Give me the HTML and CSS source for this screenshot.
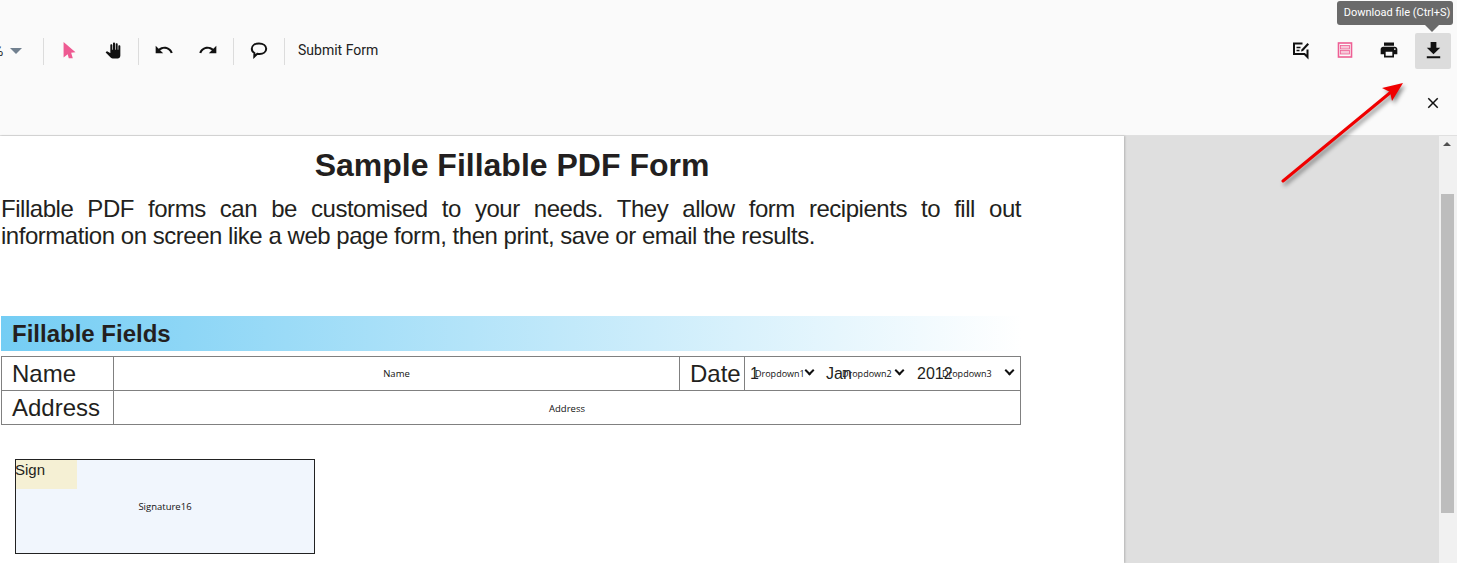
FILE: index.html
```html
<!DOCTYPE html>
<html lang="en">
<head>
  <meta charset="UTF-8">
  <title>PDF Viewer</title>
  <link rel="stylesheet" href="styles.css">
</head>
<body>

<!-- Toolbar -->
<header class="toolbar">
  <div class="toolbar-row">
    <div class="zoom-select">
      <span class="zoom-value">%</span>
      <span class="zoom-caret"></span>
    </div>
    <span class="sep"></span>
    <button class="tool">
      <svg width="26" height="26" viewBox="0 0 24 24"><path class="pink" d="M7 4.500 L18 14 L14 14.600 L15.500 19.500 L11.800 19.500 L10.800 16 L7 19 Z"/></svg>
    </button>
    <button class="tool">
      <svg width="16" height="17" viewBox="0 0 24 24"><path d="M23 5.500V20c0 2.200-1.800 4-4 4h-7.300c-1.080 0-2.100-.43-2.850-1.190L1 14.830s1.260-1.230 1.300-1.250c.22-.19.49-.29.79-.29.22 0 .42.06.6.16.04.01 4.310 2.460 4.310 2.460V4c0-.83.67-1.500 1.500-1.500S11 3.170 11 4v7h1V1.500c0-.83.67-1.500 1.500-1.500S15 .67 15 1.500V11h1V2.500c0-.83.67-1.500 1.500-1.500s1.500.67 1.500 1.500V11h1V5.500c0-.83.67-1.500 1.500-1.500s1.500.67 1.500 1.500z"/></svg>
    </button>
    <span class="sep"></span>
    <button class="tool">
      <svg width="20" height="20" viewBox="0 0 24 24"><path d="M12.500 8c-2.650 0-5.050.99-6.900 2.600L2 7v9h9l-3.620-3.620c1.390-1.160 3.160-1.880 5.120-1.880 3.540 0 6.550 2.310 7.600 5.500l2.370-.78C21.080 11.030 17.150 8 12.500 8z"/></svg>
    </button>
    <button class="tool">
      <svg width="20" height="20" viewBox="0 0 24 24"><path d="M18.400 10.600C16.550 8.990 14.150 8 11.500 8c-4.650 0-8.580 3.030-9.960 7.220L3.900 16c1.050-3.190 4.050-5.500 7.600-5.500 1.950 0 3.730.72 5.120 1.880L13 16h9V7l-3.600 3.600z"/></svg>
    </button>
    <span class="sep"></span>
    <button class="tool">
      <svg width="18" height="18" viewBox="0 0 18 18"><path class="line" d="M9 2.500c4.200 0 7.200 2.200 7.200 5.300S13.200 13 9.600 13c-.9 0-1.600-.1-2.300-.2L4.300 15.600l.1-3.600C2.700 11 1.800 9.500 1.800 7.800 1.800 4.700 4.800 2.500 9 2.500z"/></svg>
    </button>
    <span class="sep"></span>
    <button class="text-tool">Submit Form</button>

    <div class="toolbar-right">
      <button class="tool">
        <svg width="20" height="20" viewBox="0 0 20 20"><path class="line" d="M11.500 3.500H3v10.500h10.500l3 3V9.500"/><path class="line thin" d="M5.500 7.500h4M5.500 10.500h3"/><path d="M10.500 9.500l6-6.500 1.500 1.400-6 6.500-2 .6z"/></svg>
      </button>
      <button class="tool">
        <svg width="16" height="16" viewBox="0 0 16 16"><rect class="pink-line" x="1.500" y="1" width="13" height="14"/><rect class="pink-soft" x="3.500" y="3.500" width="9" height="3.500"/><rect class="pink-soft" x="3.500" y="8.500" width="9" height="3.500"/></svg>
      </button>
      <button class="tool">
        <svg width="20" height="20" viewBox="0 0 24 24"><path d="M19 8H5c-1.660 0-3 1.340-3 3v6h4v4h12v-4h4v-6c0-1.660-1.340-3-3-3zm-3 11H8v-5h8v5zm3-7c-.55 0-1-.45-1-1s.45-1 1-1 1 .45 1 1-.45 1-1 1zm-1-9H6v4h12V3z"/></svg>
      </button>
      <button class="tool active">
        <svg width="23" height="23" viewBox="0 0 24 24"><path d="M19 9h-4V3H9v6H5l7 7 7-7zM5 18v2h14v-2H5z"/></svg>
      </button>
    </div>
  </div>

  <div class="toolbar-row second">
    <button class="tool">
      <svg width="18" height="18" viewBox="0 0 24 24"><path d="M19 6.410L17.590 5 12 10.590 6.410 5 5 6.410 10.590 12 5 17.590 6.410 19 12 13.410 17.590 19 19 17.590 13.410 12z"/></svg>
    </button>
  </div>
</header>

<!-- Viewer -->
<main class="viewer">
  <section class="page">
    <h1>Sample Fillable PDF Form</h1>
    <p class="intro">Fillable PDF forms can be customised to your needs. They allow form recipients to fill out information on screen like a web page form, then print, save or email the results.</p>

    <h2 class="band">Fillable Fields</h2>

    <div class="fields">
      <div class="label">Name</div>
      <div class="field">Name</div>
      <div class="label date">Date</div>
      <div class="date-cell">
        <div class="drop one">
          <span class="drop-value">1</span>
          <select><option>Dropdown1</option></select>
        </div>
        <div class="drop two">
          <span class="drop-value">Jan</span>
          <select><option>Dropdown2</option></select>
        </div>
        <div class="drop three">
          <span class="drop-value">2012</span>
          <select><option>Dropdown3</option></select>
        </div>
      </div>
      <div class="label">Address</div>
      <div class="field wide">Address</div>
    </div>

    <div class="signature">
      <span class="sign-tag">Sign</span>
      <span class="sign-name">Signature16</span>
    </div>
  </section>

  <!-- Scrollbar -->
  <div class="scrollbar">
    <span class="scroll-up"></span>
    <span class="scroll-thumb"></span>
  </div>
</main>

<!-- Tooltip -->
<div class="tooltip">Download file (Ctrl+S)</div>

<!-- Annotation arrow -->
<svg class="arrow" width="1457" height="563" viewBox="0 0 1457 563">
  <path d="M1283 181 L1391 92" stroke="#f00000" stroke-width="3" stroke-linecap="round" fill="none"/>
  <path d="M1403 83 L1382 88 L1390 92 L1392 101 Z" fill="#f00000"/>
</svg>

</body>
</html>
```

FILE: styles.css
```css
/* Global */
html, body {
  margin: 0;
  height: 563px;
  overflow: hidden;
  background: #fff;
  font-family: "Liberation Sans", Arial, sans-serif;
  color: #231f20;
}

/* Toolbar */
.toolbar {
  height: 135px;
  background: #fafafa;
  border-bottom: 1px solid #e0e0e0;
  font-family: Roboto, sans-serif;
}

.toolbar-row {
  display: flex;
  align-items: center;
  height: 36px;
  padding-top: 33px;
  padding-right: 6px;
}

.toolbar-row.second {
  justify-content: flex-end;
  padding-top: 16px;
  padding-right: 6px;
}

.toolbar-right {
  display: flex;
  margin-left: auto;
}

.zoom-select {
  display: flex;
  align-items: center;
  width: 43px;
  overflow: hidden;
}

.zoom-value {
  margin-left: -7px;
  font-size: 14px;
  color: #212121;
}

.zoom-caret {
  margin-left: 7px;
  border-left: 6.5px solid transparent;
  border-right: 6.5px solid transparent;
  border-top: 6.5px solid #71808f;
}

.sep {
  width: 1px;
  height: 27px;
  margin: 0 7px;
  background: #dcdcdc;
}

.zoom-select + .sep {
  margin-left: 0;
}

.tool {
  display: flex;
  align-items: center;
  justify-content: center;
  width: 36px;
  height: 36px;
  padding: 0;
  border: 0;
  border-radius: 2px;
  background: none;
}

.tool + .tool {
  margin-left: 8px;
}

.tool.active {
  background: #dcdcdc;
}

.tool svg {
  margin-top: -2px;
}

.second .tool svg {
  margin-top: 0;
}

.text-tool {
  margin: -2px 0 0 6px;
  padding: 0;
  border: 0;
  background: none;
  font-family: Roboto, sans-serif;
  font-size: 14px;
  color: #212121;
}

.tool path {
  fill: #111;
}

.tool .pink {
  fill: #ee5a92;
}

.tool .line {
  fill: none;
  stroke: #111;
  stroke-width: 2;
}

.tool .line.thin {
  stroke-width: 1.5;
}

.pink-line {
  fill: none;
  stroke: #ee5f94;
  stroke-width: 1.6;
}

.pink-soft {
  fill: #f7c6d8;
  stroke: #ee5f94;
  stroke-width: 0.8;
}

/* Tooltip */
.tooltip {
  position: absolute;
  top: 1px;
  left: 1337px;
  box-sizing: border-box;
  width: 116px;
  height: 24px;
  padding-left: 4px;
  border-radius: 3px;
  background: #6a6a6a;
  color: #fff;
  font-family: Roboto, sans-serif;
  font-size: 11px;
  line-height: 23px;
  text-align: center;
}

.tooltip::after {
  content: "";
  position: absolute;
  top: 24px;
  left: 88px;
  border-left: 7px solid transparent;
  border-right: 7px solid transparent;
  border-top: 7px solid #6a6a6a;
}

/* Viewer */
.viewer {
  display: flex;
  height: 427px;
  background: #dfdfdf;
}

.page {
  box-sizing: border-box;
  width: 1124px;
  height: 427px;
  margin-right: 315px;
  padding: 11px 103px 0 1px;
  background: #fff;
  box-shadow: 1px 0 2px rgba(0, 0, 0, 0.2);
}

h1 {
  margin: 0;
  padding-left: 2px;
  font-size: 32px;
  line-height: 36px;
  font-weight: bold;
  text-align: center;
}

.intro {
  margin: 12px 0 0;
  font-size: 24px;
  line-height: 27px;
  letter-spacing: -0.47px;
  text-align: justify;
}

.band {
  height: 35px;
  margin: 67px 0 5px;
  padding-left: 11px;
  background: linear-gradient(90deg, #74cdf4, #fff);
  font-size: 24px;
  line-height: 35px;
}

/* Form table */
.fields {
  display: grid;
  grid-template-columns: 112px 566px 65px 1fr;
  grid-template-rows: 34px 34px;
  box-sizing: border-box;
  height: 69px;
  border: 1px solid #808080;
}

.label {
  padding-left: 10px;
  border-right: 1px solid #808080;
  font-size: 24px;
  line-height: 33px;
}

.label:nth-child(1), .field:nth-child(2), .label.date, .date-cell {
  border-bottom: 1px solid #808080;
}

.field {
  border-right: 1px solid #808080;
  font-family: "Open Sans", sans-serif;
  font-size: 9.5px;
  line-height: 33px;
  text-align: center;
  color: #111;
}

.field.wide {
  grid-column: 2 / 5;
  border-right: 0;
  line-height: 35px;
}

.date-cell {
  display: grid;
  grid-template-columns: 82px 90px 1fr;
  padding-left: 5px;
}

.drop {
  position: relative;
}

.drop select {
  appearance: none;
  width: 100%;
  height: 33px;
  border: 0;
  background: transparent;
  font-family: "Open Sans", sans-serif;
  font-size: 9px;
  color: #111;
}

.drop.one select { padding: 0 0 0 5px; }
.drop.two select { padding: 0 0 0 10px; }
.drop.three select { padding: 0 0 0 20px; }

/* chevron of the select */
.drop::after {
  content: "";
  position: absolute;
  top: 10px;
  width: 5px;
  height: 5px;
  border-right: 2px solid #111;
  border-bottom: 2px solid #111;
  transform: rotate(45deg);
}

.drop.one::after { left: 56px; }
.drop.two::after { left: 64px; }
.drop.three::after { left: 84px; }

/* value sits on top of the select, as in the PDF */
.drop-value {
  position: absolute;
  top: 8px;
  left: 0;
  font-size: 16px;
  line-height: 18px;
}

.drop.two .drop-value { left: -6px; }
.drop.three .drop-value { left: -5px; }

/* Signature */
.signature {
  position: relative;
  display: flex;
  align-items: center;
  justify-content: center;
  box-sizing: border-box;
  width: 300px;
  height: 95px;
  margin: 34px 0 0 14px;
  border: 1px solid #222;
  background: #f1f6fd;
}

.sign-tag {
  position: absolute;
  top: 0;
  left: 0;
  width: 61px;
  height: 29px;
  background: #f5f0d4;
  font-size: 15px;
  line-height: 20px;
  text-indent: -1px;
}

.sign-name {
  font-family: "Open Sans", sans-serif;
  font-size: 9.5px;
  color: #111;
}

/* Scrollbar */
.scrollbar {
  position: relative;
  width: 18px;
  background: #f1f1f1;
}

.scroll-up {
  position: absolute;
  top: 6px;
  left: 4px;
  border-left: 4px solid transparent;
  border-right: 4px solid transparent;
  border-bottom: 4px solid #505050;
}

.scroll-thumb {
  position: absolute;
  top: 58px;
  left: 2px;
  width: 13px;
  height: 319px;
  background: #bdbdbd;
}

/* Annotation */
.arrow {
  position: absolute;
  top: 0;
  left: 0;
  filter: drop-shadow(2px 3px 2px rgba(0, 0, 0, 0.45));
  pointer-events: none;
}
```
